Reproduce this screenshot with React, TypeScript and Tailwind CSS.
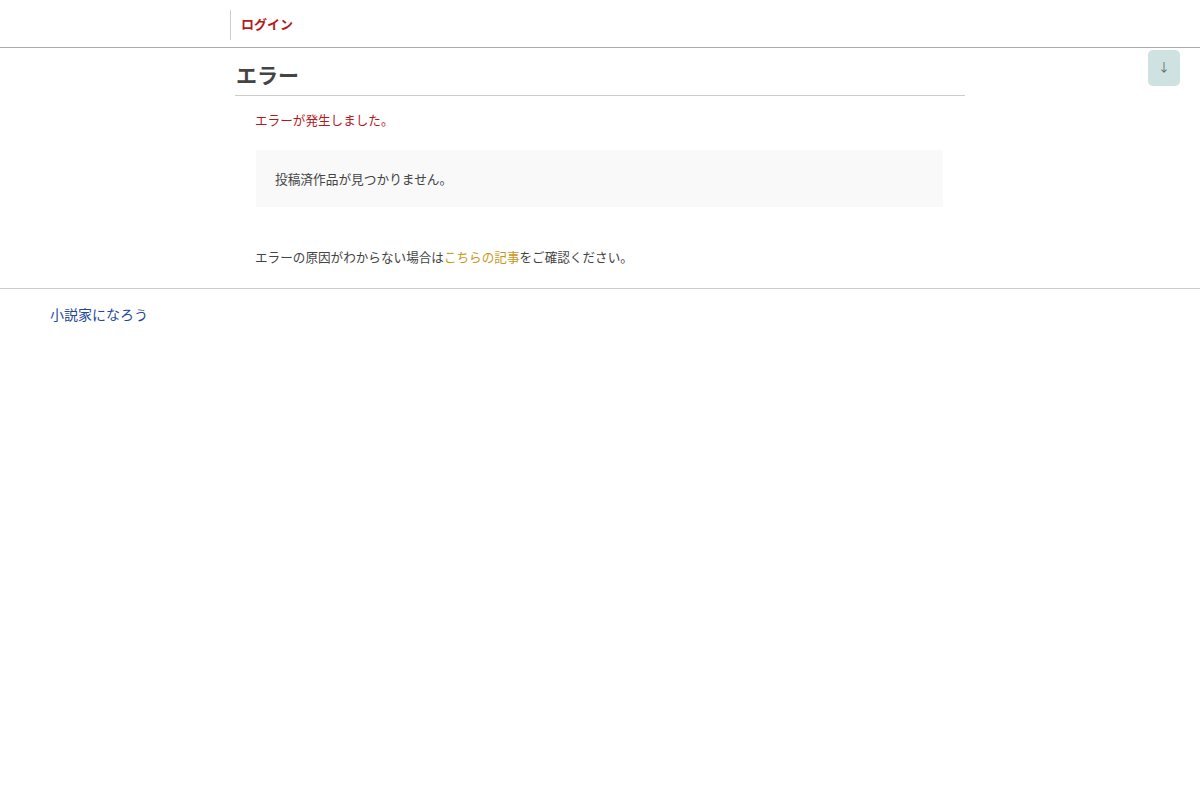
export default function App() {
  return (
    <div className="relative min-h-[800px] bg-white text-[#444] font-['Noto_Sans_CJK_JP','Noto_Sans',sans-serif]">
      <header className="border-b border-[#aaa]">
        <div className="mx-auto w-[740px] pt-[10px] pb-[7px]">
          <div className="border-l border-[#ccc] h-[30px] pl-[10px] pt-[5px]">
            <a className="block text-[13px] leading-[18px] font-bold text-[#b5181c]">ログイン</a>
          </div>
        </div>
      </header>

      <main className="mx-auto w-[740px] px-[5px] pt-[14px]">
        <h1 className="text-[21px] font-bold leading-[25px] border-b border-[#ccc] pb-[8px] px-[1px]">エラー</h1>
        <div className="px-[20px]">
          <p className="text-[12.6px] leading-[20px] text-[#b5181c] mt-[14px]">エラーが発生しました。</p>
          <div className="mt-[20px] ml-[1px] w-[687px] h-[57px] bg-[#f9f9f9] flex items-center px-[19px]">
            <p className="text-[12.7px]">投稿済作品が見つかりません。</p>
          </div>
          <p className="text-[12.6px] leading-[20px] mt-[40px] pb-[21px]">
            エラーの原因がわからない場合は
            <a className="text-[#c9971c]">こちらの記事</a>
            をご確認ください。
          </p>
        </div>
      </main>

      <footer className="border-t border-[#ccc] px-[50px] pt-[12px]">
        <a className="text-[14px] text-[#1f4a9c]">小説家になろう</a>
      </footer>

      <button className="absolute right-[20px] top-[50px] w-[32px] h-[36px] rounded-[5px] bg-[#cfe2e2] text-[#666] text-[12px] leading-none flex items-center justify-center pb-[3px]">
        ↓
      </button>
    </div>
  );
}
